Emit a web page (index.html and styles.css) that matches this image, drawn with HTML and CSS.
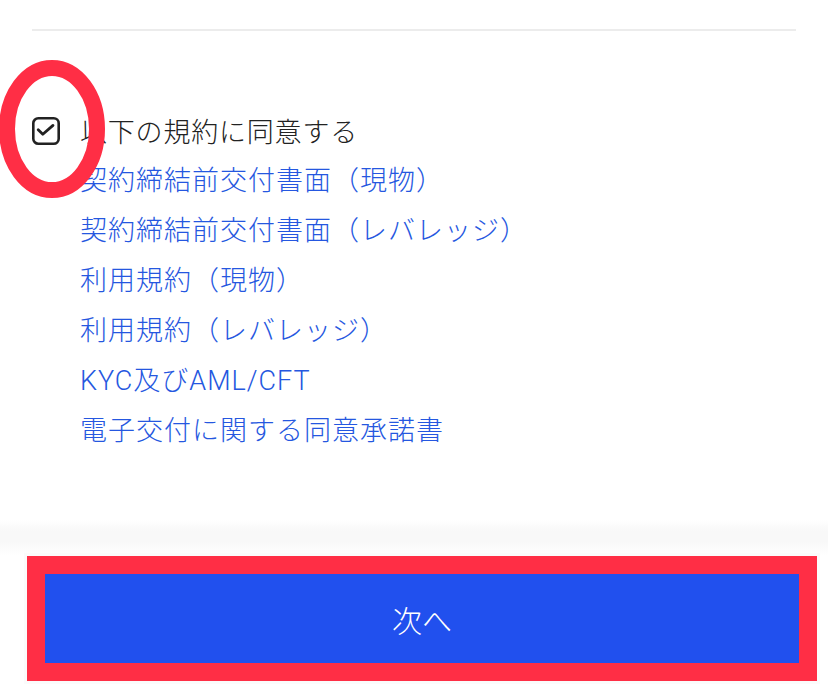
FILE: index.html
```html
<!DOCTYPE html>
<html lang="ja">
  <head>
    <meta charset="UTF-8" />
    <meta name="viewport" content="width=device-width, initial-scale=1.0" />
    <title>規約への同意</title>
    <link rel="stylesheet" href="styles.css">
  </head>
  <body>
    <div class="page">
      <hr class="divider" />

      <div class="agree">
        <label class="agree-row">
          <svg class="checkbox" width="28" height="28" viewBox="0 0 28 28">
            <rect x="1.3" y="1.3" width="25.4" height="25.4" rx="5" fill="none" stroke="#222" stroke-width="2.6" />
            <path d="M6.2 12.8 L10.8 17.2 L21 8.4" fill="none" stroke="#222" stroke-width="2.8" stroke-linecap="round" stroke-linejoin="round" />
          </svg>
          <span class="agree-text">以下の規約に同意する</span>
        </label>

        <!-- annotation ring -->
        <svg class="mark-ring" width="108" height="142" viewBox="0 0 108 142">
          <ellipse cx="52" cy="69" rx="45" ry="61" fill="none" stroke="#ff2e45" stroke-width="16" />
        </svg>

        <ul class="terms">
          <li><a href="#">契約締結前交付書面（現物）</a></li>
          <li><a href="#">契約締結前交付書面（レバレッジ）</a></li>
          <li><a href="#">利用規約（現物）</a></li>
          <li><a href="#">利用規約（レバレッジ）</a></li>
          <li><a href="#">KYC及びAML/CFT</a></li>
          <li><a href="#">電子交付に関する同意承諾書</a></li>
        </ul>
      </div>

      <footer class="bottom">
        <div class="shade"></div>
        <div class="btn-frame">
          <button class="next-btn">次へ</button>
        </div>
      </footer>
    </div>
  </body>
</html>
```

FILE: styles.css
```css
/* Reset some default styles */
* {
  margin: 0;
  padding: 0;
  box-sizing: border-box;
}

body {
  font-family: Roboto, "Noto Sans CJK JP", sans-serif;
  background-color: #fff;
  color: #222;
}

.page {
  height: 689px;
  display: flex;
  flex-direction: column;
  overflow: hidden;
}

.divider {
  border: none;
  height: 2px;
  background-color: #ececec;
  margin: 29px 32px 0 32px;
}

.agree {
  position: relative;
  padding-top: 74px;
}

.agree-row {
  display: flex;
  align-items: center;
  gap: 20px;
  height: 51px;
  padding-left: 32px;
}

.agree-text {
  font-size: 27px;
  font-weight: 300;
  letter-spacing: 0.8px;
  color: #222;
}

.mark-ring {
  position: absolute;
  left: 0;
  top: 29px;
}

.terms {
  list-style: none;
  padding-left: 80px;
}

.terms li {
  height: 50px;
  line-height: 50px;
}

.terms a {
  font-size: 27px;
  font-weight: 300;
  letter-spacing: 1px;
  color: #2557e0;
  text-decoration: none;
}

.bottom {
  margin-top: auto;
  display: flex;
  flex-direction: column;
}

.shade {
  height: 36px;
  background: linear-gradient(to bottom, #fff 0%, #f8f8f8 30%, #f8f8f8 60%, #fff 100%);
}

.btn-frame {
  margin: 0 11px 8px 27px;
  border: 18px solid #ff2e45;
  box-shadow: 0 0 0 3px #fbfbfb;
}

.next-btn {
  display: block;
  width: 100%;
  height: 89px;
  border: none;
  background-color: #2150ee;
  color: #fff;
  font-family: "Noto Sans CJK JP", sans-serif;
  font-size: 30px;
  font-weight: 300;
  cursor: pointer;
}
```
